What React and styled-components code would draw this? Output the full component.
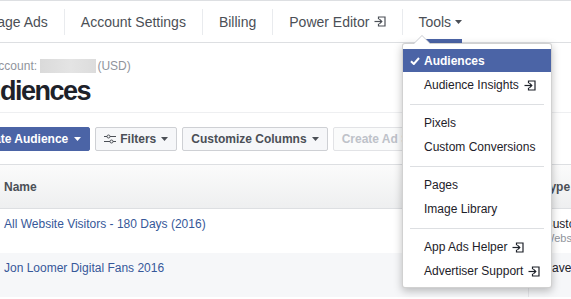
import React from 'react';
import styled, { createGlobalStyle } from 'styled-components';

const Global = createGlobalStyle`
  html, body { margin: 0; padding: 0; background: #fff; overflow: hidden; }
  body { font-family: "Liberation Sans", Arial, Helvetica, sans-serif; }
  * { box-sizing: border-box; }
`;

const Page = styled.div`
  position: relative;
  width: 571px;
  height: 299px;
  overflow: hidden;
  background: #fff;
`;

const TopBar = styled.nav`
  display: flex;
  align-items: center;
  height: 43px;
  margin-left: -46px;
  border-top: 1px solid #dddfe2;
  border-bottom: 1px solid #dddfe2;
  white-space: nowrap;
`;

const NavItem = styled.div`
  position: relative;
  display: flex;
  align-items: center;
  height: 100%;
  padding: 0 ${(p) => p.$padL || 16}px 0 ${(p) => p.$padL || 16}px;
  font-size: 14px;
  color: #4b4f56;
`;

const NavLabel = styled.span`
  position: relative;
  display: flex;
  align-items: center;
  height: 100%;
  gap: ${(p) => p.$gap || 0}px;
`;

const ActiveBar = styled.span`
  position: absolute;
  left: 0;
  right: 0;
  bottom: -1px;
  height: 4px;
  background: #4b64a6;
`;

const NavDivider = styled.span`
  width: 1px;
  height: 26px;
  background: #e9ebee;
`;

const AccountLine = styled.div`
  display: flex;
  align-items: center;
  margin: 15px 0 0 -27px;
  font-size: 12px;
  line-height: 16px;
  color: #90949c;
  white-space: nowrap;
`;

const Redacted = styled.span`
  display: inline-block;
  width: 56px;
  height: 14px;
  margin-right: 1px;
  background: linear-gradient(90deg, #dadada, #e4e4e4 55%, #dcdcdc);
`;

const TitleBlock = styled.div`
  padding-bottom: 5px;
  border-bottom: 1px solid #eeeff1;
`;

const Title = styled.h1`
  margin: 1px 0 0 -33px;
  font-size: 27px;
  line-height: 32px;
  letter-spacing: -1.5px;
  font-weight: bold;
  color: #1d2129;
  white-space: nowrap;
`;

const Toolbar = styled.div`
  display: flex;
  align-items: center;
  gap: 5px;
  margin: 14px 0 0 -35px;
  white-space: nowrap;
`;

const Button = styled.div`
  display: flex;
  align-items: center;
  gap: ${(p) => (p.$variant === 'primary' ? 6 : 5)}px;
  height: 24px;
  padding: 0 8px;
  border-radius: 2px;
  font-size: 12px;
  font-weight: bold;
  border: 1px solid
    ${(p) => (p.$variant === 'primary' ? '#4b64a6' : p.$variant === 'disabled' ? '#e2e3e6' : '#ced0d4')};
  background: ${(p) => (p.$variant === 'primary' ? '#4b64a6' : p.$variant === 'disabled' ? '#fafbfb' : '#f6f7f9')};
  color: ${(p) => (p.$variant === 'primary' ? '#fff' : p.$variant === 'disabled' ? '#bec2c9' : '#4b4f56')};
`;

const IconWrap = styled.span`
  display: flex;
  margin-right: -1px;
`;

const Table = styled.div`
  margin-top: 13px;
  border-top: 1px solid #dddfe2;
`;

const Row = styled.div`
  display: grid;
  grid-template-columns: 528px 1fr;
  height: 44px;
  background: ${(p) =>
    p.$header ? 'linear-gradient(#fbfbfb, #eeeff0)' : p.$alt ? '#f6f7f9' : '#fff'};
  border-bottom: ${(p) => (p.$header ? '1px solid #dddfe2' : 'none')};
`;

const Cell = styled.div`
  display: flex;
  flex-direction: column;
  justify-content: ${(p) => (p.$header ? 'center' : 'flex-start')};
  padding: ${(p) => (p.$header ? '0' : '7px')} 0 0 ${(p) => (p.$second ? 15 : 4)}px;
  border-left: ${(p) => (p.$second && !p.$header ? '1px solid #e5e6e9' : 'none')};
  font-size: 12px;
  line-height: 16px;
  white-space: nowrap;
  overflow: hidden;
  color: ${(p) => (p.$header ? '#4b4f56' : '#1d2129')};
  font-weight: ${(p) => (p.$header ? 'bold' : 'normal')};
`;

const LinkText = styled.span`
  color: #365899;
`;

const SubText = styled.span`
  font-size: 11px;
  line-height: 13px;
  color: #90949c;
`;

const Pointer = styled.div`
  position: absolute;
  left: 413px;
  top: 35px;
  width: 0;
  height: 0;
  border-left: 9px solid transparent;
  border-right: 9px solid transparent;
  border-bottom: 9px solid #c9cbd0;
  z-index: 3;
  &::after {
    content: '';
    position: absolute;
    left: -8px;
    top: 1px;
    border-left: 8px solid transparent;
    border-right: 8px solid transparent;
    border-bottom: 8px solid #fff;
  }
`;

const Menu = styled.div`
  position: absolute;
  left: 402px;
  top: 43px;
  width: 150px;
  padding: 5px 0 4px;
  background: #fff;
  border: 1px solid rgba(0, 0, 0, 0.18);
  border-radius: 3px;
  box-shadow: 0 3px 8px rgba(0, 0, 0, 0.25);
  z-index: 2;
`;

const MenuItem = styled.div`
  position: relative;
  display: flex;
  align-items: center;
  gap: 5px;
  height: ${(p) => (p.$active ? 23 : 24)}px;
  margin-bottom: ${(p) => (p.$active ? 1 : 0)}px;
  padding-left: 21px;
  font-size: 12px;
  white-space: nowrap;
  font-weight: ${(p) => (p.$active ? 'bold' : 'normal')};
  color: ${(p) => (p.$active ? '#fff' : '#1d2129')};
  background: ${(p) => (p.$active ? '#4b64a6' : 'transparent')};
`;

const CheckMark = styled.svg`
  position: absolute;
  left: 7px;
  top: 8px;
`;

const MenuDivider = styled.div`
  height: 1px;
  margin: 7px 7px 6px;
  background: #dddfe2;
`;

const Caret = ({ color = '#4b4f56' }) => (
  <svg width="7" height="4" viewBox="0 0 7 4">
    <path d="M0 0 H7 L3.5 4 Z" fill={color} />
  </svg>
);

const ExtIcon = ({ color = '#4b4f56' }) => (
  <svg width="12" height="11" viewBox="0 0 12 11" fill="none">
    <path d="M4.5 3.2 V1 H11 V10 H4.5 V7.8" stroke={color} strokeWidth="1.2" />
    <path d="M0.5 5.5 H7.8" stroke={color} strokeWidth="1.2" />
    <path d="M5.4 3.1 L7.8 5.5 L5.4 7.9" stroke={color} strokeWidth="1.2" />
  </svg>
);

const FilterIcon = () => (
  <svg width="12" height="10" viewBox="0 0 12 10" fill="none">
    <path d="M0 2.5 H3 M6 2.5 H12" stroke="#4b4f56" strokeWidth="1" />
    <circle cx="4.5" cy="2.5" r="1.5" stroke="#4b4f56" strokeWidth="1" />
    <path d="M0 7.5 H6 M9 7.5 H12" stroke="#4b4f56" strokeWidth="1" />
    <circle cx="7.5" cy="7.5" r="1.5" stroke="#4b4f56" strokeWidth="1" />
  </svg>
);

const navItems = ['Manage Ads', 'Account Settings', 'Billing'];

export default function App() {
  return (
    <>
      <Global />
      <Page>
        <TopBar>
          {navItems.map((n) => (
            <React.Fragment key={n}>
              <NavItem>{n}</NavItem>
              <NavDivider />
            </React.Fragment>
          ))}
          <NavItem>
            <NavLabel $gap={5}>
              Power Editor <ExtIcon />
            </NavLabel>
          </NavItem>
          <NavDivider />
          <NavItem $padL={15}>
            <NavLabel $gap={4}>
              Tools <Caret />
              <ActiveBar />
            </NavLabel>
          </NavItem>
        </TopBar>

        <TitleBlock>
          <AccountLine>
            Ad Account:&nbsp;<Redacted />(USD)
          </AccountLine>
          <Title>Audiences</Title>
        </TitleBlock>

        <Toolbar>
          <Button $variant="primary">
            Create Audience <Caret color="#fff" />
          </Button>
          <Button>
            <IconWrap>
              <FilterIcon />
            </IconWrap>
            Filters <Caret />
          </Button>
          <Button>
            Customize Columns <Caret />
          </Button>
          <Button $variant="disabled">Create Ad Set</Button>
        </Toolbar>

        <Table>
          <Row $header>
            <Cell $header>Name</Cell>
            <Cell $header $second>Type</Cell>
          </Row>
          <Row>
            <Cell>
              <LinkText>All Website Visitors - 180 Days (2016)</LinkText>
            </Cell>
            <Cell $second>
              Custom Audience
              <SubText>Website Traffic</SubText>
            </Cell>
          </Row>
          <Row $alt>
            <Cell>
              <LinkText>Jon Loomer Digital Fans 2016</LinkText>
            </Cell>
            <Cell $second>Saved Audience</Cell>
          </Row>
        </Table>

        <Pointer />
        <Menu>
          <MenuItem $active>
            <CheckMark width="10" height="8" viewBox="0 0 10 8">
              <path d="M1 4.2 L3.8 7 L9 1" stroke="#fff" strokeWidth="2" fill="none" />
            </CheckMark>
            Audiences
          </MenuItem>
          <MenuItem>
            Audience Insights <ExtIcon color="#1d2129" />
          </MenuItem>
          <MenuDivider />
          <MenuItem>Pixels</MenuItem>
          <MenuItem>Custom Conversions</MenuItem>
          <MenuDivider />
          <MenuItem>Pages</MenuItem>
          <MenuItem>Image Library</MenuItem>
          <MenuDivider />
          <MenuItem>
            App Ads Helper <ExtIcon color="#1d2129" />
          </MenuItem>
          <MenuItem>
            Advertiser Support <ExtIcon color="#1d2129" />
          </MenuItem>
        </Menu>
      </Page>
    </>
  );
}
